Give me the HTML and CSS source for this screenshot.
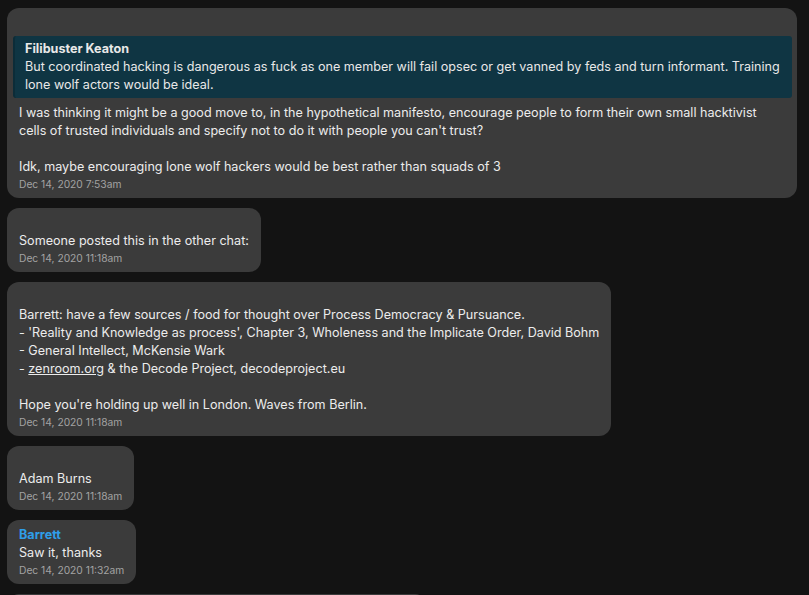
FILE: index.html
```html
<!DOCTYPE html>
<html>
<head>
<meta charset="utf-8">
<link rel="stylesheet" href="styles.css">
</head>
<body>
<div class="feed">
  <div class="bubble">
    <div class="line empty"></div>
    <div class="quote">
      <div class="qname">Filibuster Keaton</div>
      <div class="qtext">But coordinated hacking is dangerous as fuck as one member will fail opsec or get vanned by feds and turn informant. Training lone wolf actors would be ideal.</div>
    </div>
    <div class="text">I was thinking it might be a good move to, in the hypothetical manifesto, encourage people to form their own small hacktivist cells of trusted individuals and specify not to do it with people you can't trust?<br><br>Idk, maybe encouraging lone wolf hackers would be best rather than squads of 3</div>
    <div class="time">Dec 14, 2020 7:53am</div>
  </div>

  <div class="bubble">
    <div class="line empty"></div>
    <div class="text">Someone posted this in the other chat:</div>
    <div class="time">Dec 14, 2020 11:18am</div>
  </div>

  <div class="bubble">
    <div class="line empty"></div>
    <div class="text">Barrett: have a few sources / food for thought over Process Democracy &amp; Pursuance.<br>- 'Reality and Knowledge as process', Chapter 3, Wholeness and the Implicate Order, David Bohm<br>- General Intellect, McKensie Wark<br>- <a class="link" href="#">zenroom.org</a> &amp; the Decode Project, decodeproject.eu<br><br>Hope you're holding up well in London. Waves from Berlin.</div>
    <div class="time">Dec 14, 2020 11:18am</div>
  </div>

  <div class="bubble">
    <div class="line empty"></div>
    <div class="text">Adam Burns</div>
    <div class="time">Dec 14, 2020 11:18am</div>
  </div>

  <div class="bubble">
    <div class="sender">Barrett</div>
    <div class="text">Saw it, thanks</div>
    <div class="time">Dec 14, 2020 11:32am</div>
  </div>

  <div class="bubble next">
    <div class="line empty"></div>
    <div class="line empty"></div>
  </div>
</div>
</body>
</html>
```

FILE: styles.css
```css
html, body {
  margin: 0;
  padding: 0;
  background: #131313;
}
body {
  font-family: Inter, "Noto Sans", "DejaVu Sans", sans-serif;
  font-size: 12.6px;
  line-height: 18px;
  color: #e8e8e8;
}
.feed {
  display: flex;
  flex-direction: column;
  align-items: flex-start;
  gap: 10px;
  padding: 8px 12px 8px 7px;
}
.bubble {
  background: #3b3b3b;
  border-radius: 12px;
  padding: 6px 12px 6px 12px;
  max-width: 100%;
  box-sizing: border-box;
}
.bubble:first-child {
  padding-left: 6px;
  padding-right: 5px;
}
.bubble:first-child .text,
.bubble:first-child .time {
  padding-left: 6px;
  padding-right: 7px;
}
.bubble.next {
  width: 420px;
}
.empty {
  height: 18px;
}
.quote {
  background: #0f3543;
  border-radius: 3px;
  border-left: 2px solid #0c2c38;
  margin: 4px 0 6px 0;
  padding: 4px 12px 4px 10px;
}
.qname {
  font-weight: 700;
}
.text {
  color: #ececec;
}
.time {
  font-size: 10.25px;
  line-height: 16px;
  color: #a3a3a3;
}
.sender {
  color: #2f9ee8;
  font-weight: 700;
}
.link {
  color: #ececec;
  text-decoration: underline;
}
```
